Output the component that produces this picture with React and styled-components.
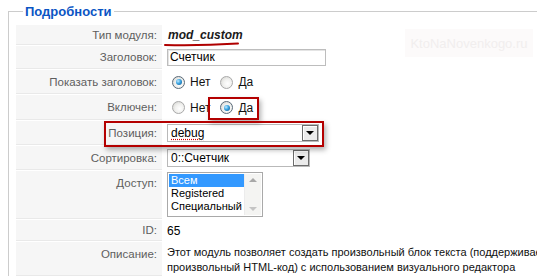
import React from 'react';
import styled, { createGlobalStyle } from 'styled-components';

const Global = createGlobalStyle`
	html, body {
		margin: 0;
		padding: 0;
		background: #fff;
		overflow: hidden;
	}
	body {
		font-family: "Liberation Sans", Arial, sans-serif;
		font-size: 11px;
		color: #000;
	}
`;

const Fieldset = styled.fieldset`
	position: relative;
	width: 640px;
	margin: 4px 0 0 8px;
	padding: 6px 0 0 7px;
	border: 1px solid #cccccc;
	border-right: none;
	border-bottom: none;
	min-height: 250px;
`;

const Legend = styled.legend`
	padding: 0 2px;
	margin-left: 7px;
	font-size: 13px;
	line-height: 15px;
	font-weight: bold;
	color: #0b55c4;
`;

const Rows = styled.div`
	position: relative;
	display: flex;
	flex-direction: column;
	gap: 1px;
`;

const Row = styled.div`
	display: grid;
	grid-template-columns: 146px 1fr;
	column-gap: 1px;
	height: ${(p) => p.h}px;
`;

const Key = styled.div`
	background: #f6f6f6;
	border-bottom: 1px solid #e9e9e9;
	color: #5e5e5e;
	font-size: 11.5px;
	text-align: right;
	line-height: 14px;
	padding: ${(p) => (p.top ? '5px 5px 0 0' : '0 5px 0 0')};
	display: flex;
	justify-content: flex-end;
	align-items: ${(p) => (p.top ? 'flex-start' : 'center')};
`;

const Value = styled.div`
	position: relative;
	padding: ${(p) => (p.top ? '5px 0 0 4px' : '0 0 0 4px')};
	display: flex;
	align-items: ${(p) => (p.top ? 'flex-start' : 'center')};
	line-height: 14px;
	font-size: 12px;
`;

const ModName = styled.span`
	font-weight: bold;
	font-style: italic;
	font-size: 12px;
	color: #1a1a1a;
	margin-left: 1px;
`;

const Scribble = styled.svg`
	position: absolute;
	left: 1px;
	top: 16px;
`;

const TextInput = styled.div`
	width: 155px;
	height: 15px;
	border: 1px solid #bdbdbd;
	box-shadow: inset 1px 1px 0 #e4e4e4;
	padding-left: 2px;
	line-height: 15px;
	background: #fff;
`;

const Radio = styled.span`
	display: inline-block;
	box-sizing: border-box;
	width: 13px;
	height: 13px;
	border-radius: 50%;
	border: 1px solid ${(p) => (p.checked ? '#5a6a78' : '#a9a9a9')};
	background: radial-gradient(circle at 60% 60%, #ffffff 0%, #f1f1ef 45%, #cfcfcb 100%);
	position: relative;
	margin-right: 5px;

	&::after {
		content: '';
		display: ${(p) => (p.checked ? 'block' : 'none')};
		position: absolute;
		left: 2.5px;
		top: 2.5px;
		width: 6px;
		height: 6px;
		border-radius: 50%;
		background: radial-gradient(circle at 35% 35%, #bfeaff 0%, #3aa3e0 45%, #0a4f86 100%);
	}
`;

const Choice = styled.label`
	display: inline-flex;
	align-items: center;
	margin-left: ${(p) => (p.first ? 5 : 0)}px;
	margin-right: ${(p) => (p.first ? 10 : 0)}px;
	color: #111;
	font-size: 12px;
`;

const Select = styled.div`
	box-sizing: border-box;
	width: ${(p) => p.w}px;
	height: 18px;
	border: 1px solid #b9b9b9;
	background: #fff;
	display: flex;
	align-items: center;
	justify-content: space-between;
	padding-left: 3px;
	font-size: 12px;
`;

const Debug = styled.span`
	text-decoration: underline dotted #d00000;
	text-underline-offset: 2px;
`;

const Arrow = styled.span`
	box-sizing: border-box;
	width: 16px;
	height: 16px;
	border: 1px solid #6c6c6c;
	background: #ebebeb;
	box-shadow: inset 1px 1px 0 #fff;
	display: flex;
	align-items: center;
	justify-content: center;

	&::before {
		content: '';
		border-left: 4px solid transparent;
		border-right: 4px solid transparent;
		border-top: 4px solid #000;
	}
`;

const ListBox = styled.div`
	box-sizing: border-box;
	width: 96px;
	height: 45px;
	border: 1px solid #a9a9a9;
	display: flex;
	padding: 1px;
	background: #fff;
`;

const Options = styled.div`
	flex: 1;
	display: flex;
	flex-direction: column;
	font-size: 11px;
	line-height: 13px;
`;

const Option = styled.div`
	padding-left: 2px;
	background: ${(p) => (p.selected ? '#3399ff' : 'transparent')};
	color: ${(p) => (p.selected ? '#fff' : '#000')};
`;

const ScrollBar = styled.div`
	width: 16px;
	background: #f4f4f2;
	border-left: 1px solid #ececec;
	display: flex;
	flex-direction: column;
	justify-content: space-between;
	align-items: center;
	padding: 4px 0;
`;

const Tri = styled.span`
	border-left: 4px solid transparent;
	border-right: 4px solid transparent;
	${(p) => (p.up ? 'border-bottom: 4px solid #a8a8a8;' : 'border-top: 4px solid #c4c4c4;')}
`;

const Desc = styled.div`
	white-space: nowrap;
	font-size: 11px;
	line-height: 15px;
	color: #111;
`;

const Highlight = styled.div`
	position: absolute;
	left: ${(p) => p.x}px;
	top: ${(p) => p.y}px;
	width: ${(p) => p.w}px;
	height: ${(p) => p.h}px;
	border: 2px solid #b40000;
	box-shadow: 2px 3px 5px rgba(0, 0, 0, 0.3);
	pointer-events: none;
`;

const Watermark = styled.div`
	position: absolute;
	left: 396px;
	top: 10px;
	width: 128px;
	height: 28px;
	background: #fcfafa;
	color: #f1eeee;
	font-size: 13px;
	display: flex;
	align-items: center;
	justify-content: center;
`;

export default function App() {
	return (
		<>
			<Global />
			<Fieldset>
				<Legend>Подробности</Legend>
				<Watermark>KtoNaNovenkogo.ru</Watermark>
				<Rows>
					<Row h={20}>
						<Key>Тип модуля:</Key>
						<Value>
							<ModName>mod_custom</ModName>
							<Scribble width="76" height="6" viewBox="0 0 76 6">
								<path d="M1 4 C 20 4.5, 50 4, 74 2.5" stroke="#b00000" strokeWidth="2" fill="none" strokeLinecap="round" />
							</Scribble>
						</Value>
					</Row>
					<Row h={23}>
						<Key>Заголовок:</Key>
						<Value>
							<TextInput>Счетчик</TextInput>
						</Value>
					</Row>
					<Row h={24}>
						<Key>Показать заголовок:</Key>
						<Value>
							<Choice first><Radio checked />Нет</Choice>
							<Choice><Radio />Да</Choice>
						</Value>
					</Row>
					<Row h={25}>
						<Key>Включен:</Key>
						<Value>
							<Choice first><Radio />Нет</Choice>
							<Choice><Radio checked />Да</Choice>
						</Value>
					</Row>
					<Row h={24}>
						<Key>Позиция:</Key>
						<Value>
							<Select w={152}>
								<Debug>debug</Debug>
								<Arrow />
							</Select>
						</Value>
					</Row>
					<Row h={24}>
						<Key>Сортировка:</Key>
						<Value>
							<Select w={143}>
								<span>0::Счетчик</span>
								<Arrow />
							</Select>
						</Value>
					</Row>
					<Row h={48}>
						<Key top>Доступ:</Key>
						<Value top style={{ paddingTop: 1 }}>
							<ListBox>
								<Options>
									<Option selected>Всем</Option>
									<Option>Registered</Option>
									<Option>Специальный</Option>
								</Options>
								<ScrollBar>
									<Tri up />
									<Tri />
								</ScrollBar>
							</ListBox>
						</Value>
					</Row>
					<Row h={21}>
						<Key>ID:</Key>
						<Value>65</Value>
					</Row>
					<Row h={34}>
						<Key top>Описание:</Key>
						<Value top style={{ paddingTop: 3 }}>
							<Desc>
								Этот модуль позволяет создать произвольный блок текста (поддерживается
								<br />
								произвольный HTML-код) с использованием визуального редактора
							</Desc>
						</Value>
					</Row>
					<Highlight x={192} y={72} w={47} h={19} />
					<Highlight x={88} y={96} w={216} h={22} />
				</Rows>
			</Fieldset>
		</>
	);
}
